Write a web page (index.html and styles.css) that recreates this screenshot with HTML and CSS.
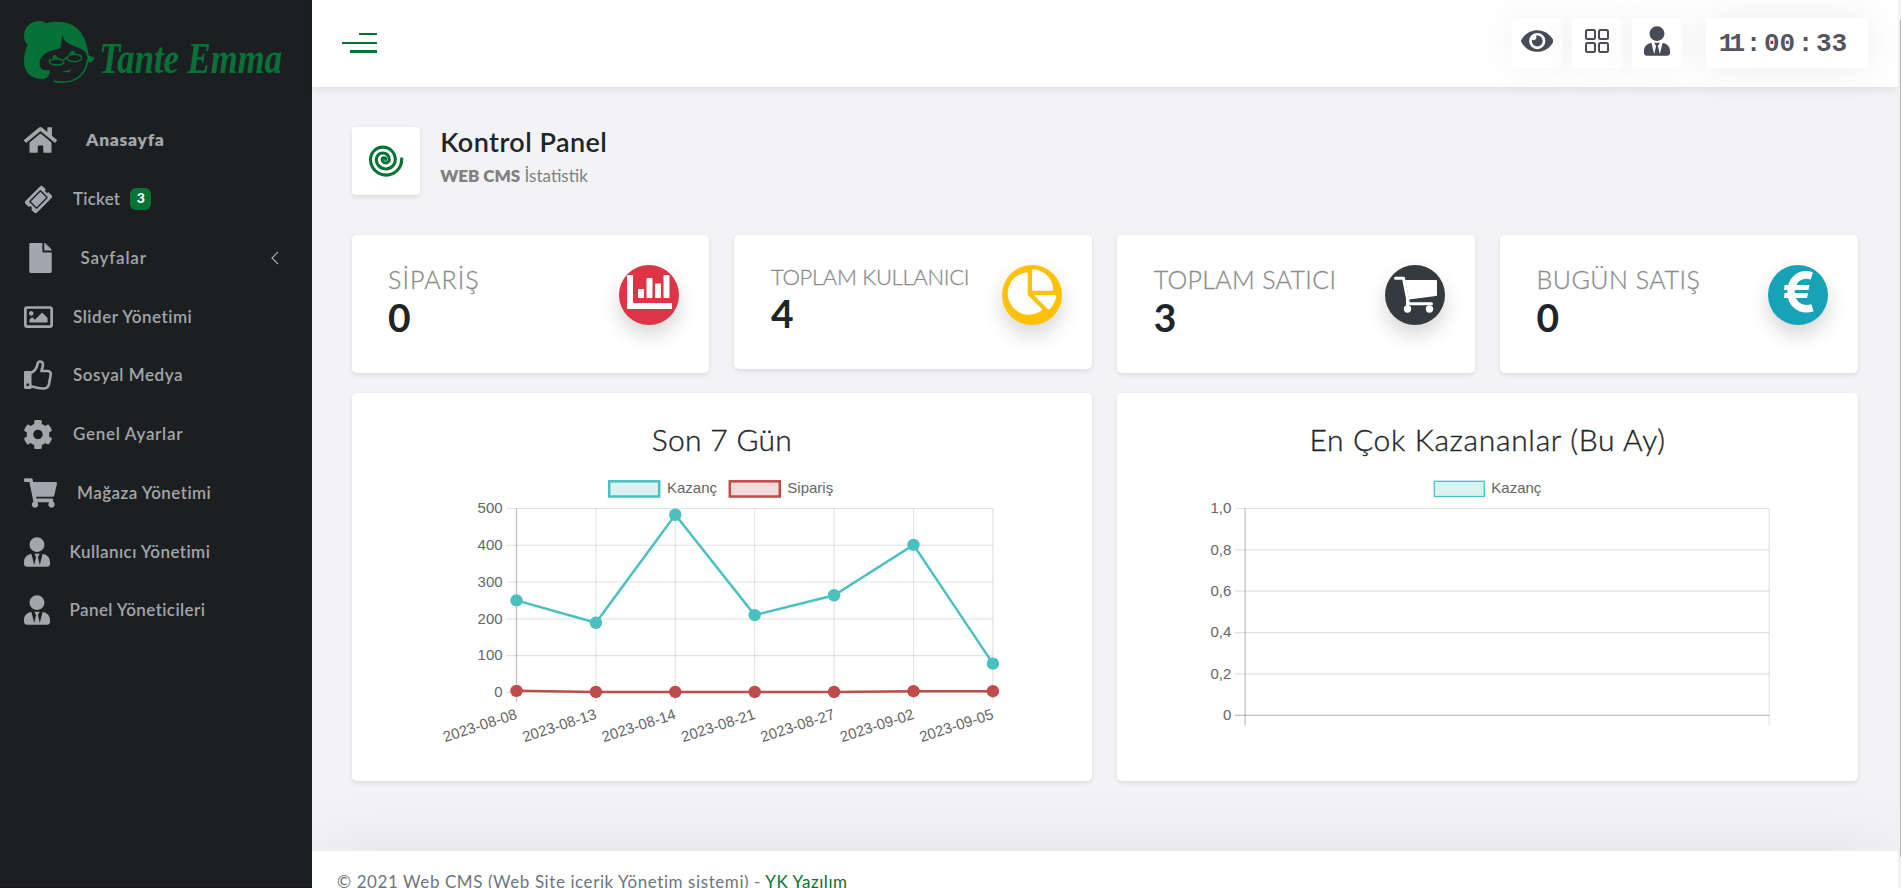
FILE: index.html
```html
<!DOCTYPE html>
<html lang="tr">
<head>
<meta charset="utf-8">
<title>Kontrol Panel</title>
<link rel="stylesheet" href="styles.css">
</head>
<body>
<aside class="sidebar">
  <a class="logo">
    <svg class="logo-art" viewBox="72 60 780 192">
      <path class="hair" d="M72 108C72 80 95 62 120 63Q130 64 138 70C175 60 218 66 241 95C258 118 263 145 266 166Q276 171 284 174Q278 186 266 189L259 160C240 135 196 142 187 106C184 120 185 138 180 145C150 152 125 160 119 185C116 205 130 214 149 210C150 224 145 236 125 237C95 236 72 218 72 185Q72 155 83 135Q72 124 72 108Z"/>
      <path class="face-line" d="M263 180C258 222 230 246 190 246Q175 247 163 244"/>
      <g class="glasses"><ellipse cx="170" cy="186" rx="22" ry="9"/><ellipse cx="223" cy="174" rx="22" ry="11"/><path d="M191 180Q197 170 203 174M148 184L150 177M243 166L246 170"/></g>
      <path class="hair" d="M156 175Q163 155 172 172L180 175ZM206 163Q217 143 228 161ZM187 213Q202 214 216 208Q205 224 187 213Z"/>
      <text class="logo-text" x="298" y="218" textLength="548" lengthAdjust="spacingAndGlyphs">Tante Emma</text>
    </svg>
  </a>
  <nav class="menu">
    <a class="item item-home active"><svg class="i-home" viewBox="0 32 576 448"><path d="M280.37 148.26L96 300.11V464a16 16 0 0 0 16 16l112.06-.29a16 16 0 0 0 15.92-16V368a16 16 0 0 1 16-16h64a16 16 0 0 1 16 16v95.64a16 16 0 0 0 16 16.05L464 480a16 16 0 0 0 16-16V300L295.67 148.26a12.19 12.19 0 0 0-15.3 0zM571.6 251.47L488 182.56V44.05a12 12 0 0 0-12-12h-56a12 12 0 0 0-12 12v72.61L318.47 43a48 48 0 0 0-61 0L4.34 251.47a12 12 0 0 0-1.6 16.9l25.5 31A12 12 0 0 0 45.15 301l235.22-193.74a12.19 12.19 0 0 1 15.3 0L530.9 301a12 12 0 0 0 16.9-1.6l25.5-31a12 12 0 0 0-1.7-16.93z"/></svg><span>Anasayfa</span></a>
    <a class="item item-ticket"><svg class="i-ticket" viewBox="-340 -340 680 680"><path transform="rotate(-45) translate(-288 -256)" d="M128 160h320v192H128V160zm400 96c0 26.51 21.49 48 48 48v96c0 26.51-21.49 48-48 48H48c-26.51 0-48-21.49-48-48v-96c26.51 0 48-21.49 48-48s-21.49-48-48-48v-96c0-26.51 21.49-48 48-48h480c26.51 0 48 21.49 48 48v96c-26.51 0-48 21.49-48 48zm-48-104c0-13.255-10.745-24-24-24H120c-13.255 0-24 10.745-24 24v208c0 13.255 10.745 24 24 24h336c13.255 0 24-10.745 24-24V152z"/></svg><span>Ticket</span><b class="badge">3</b></a>
    <a class="item item-pages"><svg class="i-file" viewBox="0 0 384 512"><path d="M224 136V0H24C10.7 0 0 10.7 0 24v464c0 13.3 10.7 24 24 24h336c13.3 0 24-10.7 24-24V160H248c-13.2 0-24-10.8-24-24zm160-14.1v6.1H256V0h6.1c6.4 0 12.5 2.5 17 7l97.9 98c4.5 4.5 7 10.6 7 16.9z"/></svg><span>Sayfalar</span><svg class="chevron" viewBox="0 0 8 14"><path d="M7 1L1 7L7 13"/></svg></a>
    <a class="item item-slider"><svg class="i-image" viewBox="0 64 512 384"><path d="M464 64H48C21.49 64 0 85.49 0 112v288c0 26.51 21.49 48 48 48h416c26.51 0 48-21.49 48-48V112c0-26.51-21.49-48-48-48zm-6 336H54a6 6 0 0 1-6-6V118a6 6 0 0 1 6-6h404a6 6 0 0 1 6 6v276a6 6 0 0 1-6 6zM128 152c-22.091 0-40 17.909-40 40s17.909 40 40 40 40-17.909 40-40-17.909-40-40-40zM96 352h320v-80l-87.515-87.515c-4.686-4.686-12.284-4.686-16.971 0L192 304l-39.515-39.515c-4.686-4.686-12.284-4.686-16.971 0L96 304v48z"/></svg><span>Slider Yönetimi</span></a>
    <a class="item item-social"><svg class="i-thumb" viewBox="0 0 28 30"><path fill-rule="evenodd" d="M1 11H6.5Q7.5 11 7.5 12V28Q7.5 29 6.5 29H1.5Q0 29 0 27.5V12Q0 11 1 11ZM2.5 23.5V26H5V23.5Z"/><path class="thumb-line" d="M7 13C11 11 13 7.5 13.5 4C14 .8 18.300 .5 18.900 4C19.300 7 17.500 9 17.500 11H23.500C26.500 11 27 13 26.500 16L25 24Q24 28.300 20 28.500C14.500 28.900 11 26.500 7 26.500"/></svg><span>Sosyal Medya</span></a>
    <a class="item item-settings"><svg class="i-cog" viewBox="18 8 476 496"><path d="M487.4 315.7l-42.6-24.6c4.3-23.2 4.3-47 0-70.2l42.6-24.6c4.9-2.8 7.1-8.6 5.5-14-11.1-35.6-30-67.8-54.7-94.6-3.8-4.1-10-5.1-14.8-2.3L380.8 110c-17.9-15.4-38.5-27.3-60.8-35.1V25.8c0-5.6-3.9-10.5-9.4-11.7-36.7-8.2-74.3-7.8-109.2 0-5.5 1.2-9.4 6.1-9.4 11.7V75c-22.2 7.9-42.8 19.8-60.8 35.1L88.7 85.5c-4.9-2.8-11-1.9-14.8 2.3-24.7 26.7-43.6 58.9-54.7 94.6-1.7 5.4.6 11.2 5.5 14L67.3 221c-4.3 23.2-4.3 47 0 70.2l-42.6 24.6c-4.9 2.8-7.1 8.6-5.5 14 11.1 35.6 30 67.8 54.7 94.6 3.8 4.1 10 5.1 14.8 2.3l42.6-24.6c17.9 15.4 38.5 27.3 60.8 35.1v49.2c0 5.6 3.9 10.5 9.4 11.7 36.7 8.2 74.3 7.8 109.2 0 5.5-1.2 9.4-6.1 9.4-11.7v-49.2c22.2-7.9 42.8-19.8 60.8-35.1l42.6 24.6c4.9 2.8 11 1.9 14.8-2.3 24.7-26.7 43.6-58.9 54.7-94.6 1.5-5.5-.7-11.3-5.6-14.1zM256 336c-44.1 0-80-35.9-80-80s35.9-80 80-80 80 35.9 80 80-35.9 80-80 80z"/></svg><span>Genel Ayarlar</span></a>
    <a class="item item-shop"><svg class="i-cart" viewBox="0 0 576 512"><path d="M528.12 301.319l47.273-208C578.806 78.301 567.391 64 551.99 64H159.208l-9.166-44.81C147.758 8.021 137.93 0 126.529 0H24C10.745 0 0 10.745 0 24v16c0 13.255 10.745 24 24 24h69.883l70.248 343.435C147.325 417.1 136 435.222 136 456c0 30.928 25.072 56 56 56s56-25.072 56-56c0-15.674-6.447-29.835-16.824-40h209.647C430.447 426.165 424 440.326 424 456c0 30.928 25.072 56 56 56s56-25.072 56-56c0-22.172-12.888-41.332-31.579-50.405l5.517-24.276c3.413-15.018-8.002-29.319-23.403-29.319H218.117l-6.545-32h293.145c11.206 0 20.92-7.754 23.403-18.681z"/></svg><span>Mağaza Yönetimi</span></a>
    <a class="item item-users"><svg class="i-user" viewBox="0 0 448 512"><path id="user-tie" d="M224 256c70.7 0 128-57.3 128-128S294.7 0 224 0 96 57.3 96 128s57.3 128 128 128zm95.8 32.6L272 480l-32-136 32-56h-96l32 56-32 136-47.8-191.4C56.9 292 0 350.3 0 422.4V464c0 26.5 21.5 48 48 48h352c26.5 0 48-21.5 48-48v-41.6c0-72.1-56.9-130.4-128.2-133.8z"/></svg><span>Kullanıcı Yönetimi</span></a>
    <a class="item item-admins"><svg class="i-user" viewBox="0 0 448 512"><use href="#user-tie"/></svg><span>Panel Yöneticileri</span></a>
  </nav>
</aside>
<div class="page">
  <header class="topbar">
    <div class="burger"><i></i><i></i><i></i></div>
    <div class="tools">
      <a class="tool"><svg class="i-eye" viewBox="0 64 576 384"><path d="M572.52 241.4C518.29 135.59 410.93 64 288 64S57.68 135.64 3.48 241.41a32.35 32.35 0 0 0 0 29.19C57.71 376.41 165.07 448 288 448s230.32-71.64 284.52-177.41a32.35 32.35 0 0 0 0-29.19zM288 400a144 144 0 1 1 144-144 143.93 143.93 0 0 1-144 144zm0-240a95.31 95.31 0 0 0-25.31 3.79 47.85 47.85 0 0 1-66.9 66.9A95.78 95.78 0 1 0 288 160z"/></svg></a>
      <a class="tool"><svg class="i-grid" viewBox="0 0 24 24"><rect x="1" y="1" width="9" height="9" rx="1.5"/><rect x="14" y="1" width="9" height="9" rx="1.5"/><rect x="1" y="14" width="9" height="9" rx="1.5"/><rect x="14" y="14" width="9" height="9" rx="1.5"/></svg></a>
      <a class="tool"><svg class="i-user" viewBox="0 0 448 512"><use href="#user-tie"/></svg></a>
      <div class="clock"><span class="hours">11</span><i>:</i><span>00</span><i>:</i><span>33</span></div>
    </div>
  </header>
  <main class="content">
    <section class="heading">
      <div class="heading-icon"><svg viewBox="0 0 35 33"><path d="M32.6 12.8Q32.7 13 32.7 13.5A15.6 15.6 0 0 1 1.5 13.5A12.4 12.4 0 0 1 26.3 13.5A9.5 9.5 0 0 1 7.3 13.5A6.5 6.5 0 0 1 20.3 13.5A3.55 3.55 0 0 1 13.2 13.5A1.75 1.75 0 0 1 16.7 13.5"/></svg></div>
      <div><h1>Kontrol Panel</h1><p><b>WEB CMS</b> İstatistik</p></div>
    </section>
    <section class="stats">
      <article class="card stat"><div><h2 class="orders">SİPARİŞ</h2><strong>0</strong></div>
        <svg class="disc red" viewBox="0 0 60 60"><path d="M8 11Q8 10 9 10H13Q14 10 14 11V38H53V44H9Q8 44 8 43Z"/><rect x="19" y="24" width="6" height="9" rx="1"/><rect x="27.5" y="13" width="6" height="20" rx="1"/><rect x="36" y="18.5" width="6" height="14.5" rx="1"/><rect x="44.5" y="10" width="6" height="23" rx="1"/></svg></article>
      <article class="card stat stat-short"><div><h2 class="users">TOPLAM KULLANICI</h2><strong>4</strong></div>
        <svg class="disc yellow" viewBox="0 0 60 60"><path transform="translate(5.8 4.3) scale(.089)" d="M527.79 288H290.5l158.03 158.03c6.04 6.04 15.98 6.53 22.19.68 38.7-36.46 65.32-85.61 73.13-140.86 1.34-9.46-6.51-17.85-16.06-17.85zm-15.83-64.8C503.72 103.74 408.26 8.28 288.8.04 279.68-.59 272 7.1 272 16.24V240h223.77c9.14 0 16.82-7.68 16.19-16.8zM224 288V50.71c0-9.55-8.39-17.4-17.84-16.06C86.99 51.49-4.1 155.6.14 280.37 4.5 408.51 114.83 512.68 243.03 511.07c50.4-.63 96.97-16.87 135.26-44.03 7.9-5.6 8.42-17.23 1.57-24.08L224 288z"/></svg></article>
      <article class="card stat"><div><h2 class="sellers">TOPLAM SATICI</h2><strong>3</strong></div>
        <svg class="disc dark" viewBox="0 0 60 60"><path d="M20 15H51Q52 15 52 16V30Q52 31 51 31L24 34.5Z"/><path class="cart-line" d="M10.500 13.300H18.500L23.500 38.800H46.500M22.500 34V43"/><circle cx="22.5" cy="44" r="3.7"/><circle cx="44.5" cy="44" r="3.7"/></svg></article>
      <article class="card stat"><div><h2 class="today">BUGÜN SATIŞ</h2><strong>0</strong></div>
        <svg class="disc teal" viewBox="0 0 60 60"><path d="M16.5 20H41.5L40.5 25H16ZM16.5 28H40L39 33H16Z"/><path class="euro-line" d="M43.800 10.800C31 7 23 16 23 26.800C23 38 31 46.500 44.500 42.800"/></svg></article>
    </section>
    <section class="charts">
      <article class="card chart"><h3>Son 7 Gün</h3><svg id="line" viewBox="352 470 740 290"></svg></article>
      <article class="card chart"><h3 class="wide">En Çok Kazananlar (Bu Ay)</h3><svg id="bar" viewBox="1117.5 470 740 290"></svg></article>
    </section>
  </main>
  <footer class="footer">© 2021 Web CMS (Web Site icerik Yönetim sistemi) - <a>YK Yazılım</a></footer>
</div>
<div class="scroll"><i></i></div>
<script src="charts.js"></script>
</body>
</html>
```
FILE: styles.css
```css
* { box-sizing: border-box; }
body { margin: 0; height: 888px; overflow: hidden; display: flex; background: #f3f3f6; font-family: Lato, "Noto Sans", sans-serif; color: #212529; }
h1, h2, h3, p { margin: 0; }
svg { display: block; flex: none; }

.sidebar { width: 312px; height: 888px; flex: none; background: #1c1f22; border-bottom: 1px solid #1f1519; }
.logo { display: block; padding: 20px 0 0 24px; height: 111px; }
.logo-art { width: 260px; height: 64px; overflow: visible; }
.hair { fill: #077238; }
.face-line { fill: none; stroke: #077238; stroke-width: 5; stroke-linecap: round; }
.glasses { fill: none; stroke: #077238; stroke-width: 4; }
.logo-text { font: italic bold 132px "Liberation Serif", serif; fill: #077238; }

.item { display: flex; align-items: center; height: 58.75px; padding-left: 24px; color: #a3a6aa; font-size: 17px; font-weight: 600; line-height: 24px; }
.item svg { fill: #a3a6aa; }
.item.active { font-weight: 800; }
.item-home { font-size: 17.5px; letter-spacing: .7px; }
.item-ticket { letter-spacing: .2px; }
.item-pages { letter-spacing: .8px; }
.item-slider { letter-spacing: .52px; }
.item-social { letter-spacing: .56px; }
.item-settings { letter-spacing: .7px; }
.item-shop { letter-spacing: .45px; }
.item-users { letter-spacing: .43px; }
.item-admins { letter-spacing: .4px; }
.i-home { width: 33px; height: 26px; margin-right: 29px; }
.i-ticket { width: 29px; height: 29px; margin-right: 20px; }
.i-file { width: 23px; height: 30px; margin: 0 29px 0 4.5px; }
.i-image { width: 29px; height: 22px; margin-right: 20px; }
.i-thumb { width: 28px; height: 30px; margin-right: 21px; }
.thumb-line { fill: none; stroke: #a3a6aa; stroke-width: 2.6; }
.i-cog { width: 28px; height: 29px; margin-right: 21px; }
.i-cart { width: 33px; height: 30px; margin-right: 20px; }
.i-user { width: 26px; height: 30px; }
.item .i-user { margin-right: 19.5px; }
.badge { margin-left: 10px; width: 21px; height: 22px; border-radius: 6px; background: #0a7236; color: #fff; font-size: 14px; line-height: 20px; text-align: center; font-weight: 900; letter-spacing: 0; }
.item .chevron { width: 8px; height: 14px; margin-left: auto; margin-right: 33px; fill: none; stroke: #a3a6aa; stroke-width: 1.2; }

.page { width: 1586px; flex: none; height: 888px; display: flex; flex-direction: column; }
.topbar { height: 87px; flex: none; background: #fff; display: flex; justify-content: space-between; align-items: flex-start; padding: 18px 30px 0 30px; box-shadow: 0 2px 10px rgba(0,0,0,.09); overflow: clip; overflow-clip-margin: 12px; }
.burger { display: flex; flex-direction: column; align-items: flex-end; width: 35px; padding-top: 15px; }
.burger i { background: #0a7038; width: 35px; height: 2px; margin-bottom: 7px; }
.burger i:first-child { width: 18px; }
.burger i:last-child { width: 27px; height: 3px; margin: -1px 0 0; }
.tools { display: flex; gap: 10px; }
.tool { width: 50px; height: 50px; background: #fff; border-radius: 4px; display: flex; justify-content: center; padding-top: 8px; box-shadow: 0 0 40px rgba(0,0,0,.06); fill: #494b58; }
.i-eye { width: 32.5px; height: 22px; margin-top: 4px; }
.i-grid { width: 24px; height: 24px; margin-top: 3px; fill: none; stroke: #494b58; stroke-width: 2; }
.clock { width: 162px; height: 50px; margin-left: 14px; padding: 3px 15px 0 0; background: #fff; box-shadow: 0 0 40px rgba(0,0,0,.08); display: flex; align-items: center; justify-content: center; color: #55565d; font: bold 26px/47px "Liberation Mono", monospace; }
.clock i { font-style: normal; width: 21px; text-align: center; }
.clock span { width: 31px; text-align: right; }
.clock .hours { letter-spacing: -5px; padding-right: 3px; }

.content { padding: 40px 40.2px 0 39.6px; height: 764px; flex: none; }
.heading { display: flex; gap: 20.6px; height: 108px; }
.heading-icon { width: 68px; height: 68px; padding: 19px 0 0 17px; background: #fff; border-radius: 4px; box-shadow: 0 2px 5px rgba(0,0,0,.1); }
.heading-icon svg { width: 35px; height: 33px; fill: none; stroke: #077238; stroke-width: 3.1; stroke-linecap: round; overflow: visible; }
h1 { font-size: 27px; line-height: 32px; font-weight: 600; margin-top: -1px; letter-spacing: .45px; }
.heading p { font-size: 17px; line-height: 24px; color: #808080; margin-top: 6px; }
.heading b { font-weight: 800; }

.card { background: #fff; border-radius: 5px; box-shadow: 0 2px 5px rgba(0,0,0,.1); }
.stats { display: grid; grid-template-columns: repeat(4, 1fr); gap: 25px; align-items: start; }
.stat { height: 138px; padding: 29px 30px 0 36.5px; display: flex; justify-content: space-between; }
.stat-short { height: 134px; }
.stat h2 { font-size: 25px; line-height: 30px; font-weight: 300; color: #8c8c8c; white-space: nowrap; -webkit-text-stroke: .3px #8c8c8c; }
.stat .orders { letter-spacing: 1px; }
.stat .users { font-size: 22px; line-height: 26px; letter-spacing: -.3px; }
.stat .sellers { letter-spacing: .32px; }
.stat .today { letter-spacing: .5px; }
.stat strong { display: block; font-size: 39px; line-height: 46px; font-weight: 700; }
.disc { width: 60px; height: 60px; margin-top: 1px; border-radius: 50%; box-shadow: 0 10px 20px rgba(0,0,0,.16); fill: #fff; }
.red { background: #dc3545; }
.yellow { background: #ffc107; }
.dark { background: #343a40; }
.teal { background: #17a2b8; }
.cart-line { fill: none; stroke: #fff; stroke-width: 3; stroke-linecap: round; stroke-linejoin: round; }
.euro-line { fill: none; stroke: #fff; stroke-width: 7.5; }

.charts { display: grid; grid-template-columns: 1fr 1fr; gap: 25px; margin-top: 20px; }
.chart { height: 388px; padding-top: 26px; display: flex; flex-direction: column; align-items: center; }
.chart h3 { font-size: 30px; line-height: 40px; font-weight: 300; height: 51px; letter-spacing: .3px; -webkit-text-stroke: .35px #212529; }
.chart .wide { letter-spacing: .68px; }
.chart svg { width: 740px; height: 290px; font: 15px "Liberation Sans", Arial, sans-serif; fill: #666; }
.grid { stroke: rgba(0,0,0,.11); stroke-width: 1.2; fill: none; }
.axis { stroke: rgba(0,0,0,.25); stroke-width: 1.2; fill: none; }
.series { fill: none; stroke-width: 2.5; }
.end { text-anchor: end; }

.footer { height: 60px; flex: none; background: #fff; padding: 19px 25px; font-size: 17px; line-height: 24px; letter-spacing: .58px; color: #6c757d; box-shadow: 0 0 70px rgba(0,0,0,.08); clip-path: inset(-80px 0 0 0); }
.footer a { color: #0a7038; }
.scroll { width: 3px; background: #f1f1f3; display: flex; justify-content: flex-end; padding: 20px 0 31px; }
.scroll i { width: 1px; background: #b5b5b5; }
```
FILE: charts.js
```js
const TEAL = '#4bc0c0', RED = '#c04b4b';
const line = (c, d) => `<path class="${c}" d="${d}"/>`;
const text = (x, y, s, c = '') => `<text class="${c}" x="${x}" y="${y}">${s}</text>`;
const box = (x, fill, stroke, w) => `<rect x="${x}" y="481.3" width="50" height="15.2" fill="${fill}" stroke="${stroke}" stroke-width="${w}"/>`;

function lineChart() {
  const labels = ['2023-08-08', '2023-08-13', '2023-08-14', '2023-08-21', '2023-08-27', '2023-09-02', '2023-09-05'];
  const sales = [250, 189, 483, 210, 264, 401, 78], orders = [4, 1, 1, 1, 1, 3, 3];
  const X = i => 516.5 + 79.4 * i, Y = v => 692.3 - v * .3676;
  let s = box(609.2, '#dbf2f2', TEAL, 2.5) + text(667, 493, 'Kazanç') + box(729.8, '#f2dbdb', RED, 2.5) + text(787.3, 493, 'Sipariş');
  for (let v = 0; v <= 500; v += 100) s += line('grid', `M506.5 ${Y(v)}H993`) + text(502.6, Y(v) + 4.8, v, 'end');
  labels.forEach((l, i) => {
    s += line(i ? 'grid' : 'axis', `M${X(i)} 508.5V702.3`);
    s += `<text class="end" transform="translate(${X(i) + 1.5} 718.5) rotate(-18)">${l}</text>`;
  });
  [[orders, RED], [sales, TEAL]].forEach(([d, c]) => {
    s += `<polyline class="series" stroke="${c}" points="${d.map((v, i) => X(i) + ',' + Y(v)).join(' ')}"/>`;
    s += d.map((v, i) => `<circle cx="${X(i)}" cy="${Y(v)}" r="6.2" fill="${c}"/>`).join('');
  });
  document.getElementById('line').innerHTML = s;
}

function emptyChart() {
  let s = box(1433.8, '#dbf2f2', TEAL, 1.3) + text(1490.8, 493, 'Kazanç');
  ['0', '0,2', '0,4', '0,6', '0,8', '1,0'].forEach((l, i) => {
    const y = 715.3 - 41.36 * i;
    s += line(i ? 'grid' : 'axis', `M1234.5 ${y}H1768.7`) + text(1230.8, y + 4.8, l, 'end');
  });
  s += line('axis', 'M1244.6 508.5V725.7') + line('grid', 'M1768.7 508.5V725.7');
  document.getElementById('bar').innerHTML = s;
}

lineChart();
emptyChart();
```
